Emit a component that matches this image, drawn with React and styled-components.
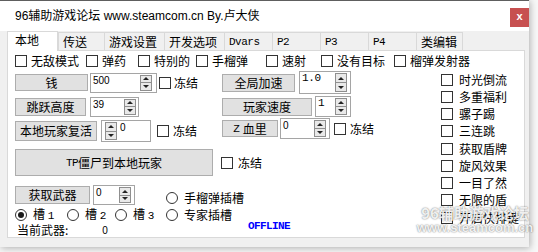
import React from 'react';
import styled, { createGlobalStyle } from 'styled-components';

const Global = createGlobalStyle`
  html, body { margin: 0; padding: 0; }
  body {
    background: #f7f7f7;
    width: 538px; height: 252px; overflow: hidden;
    font-family: "Noto Sans CJK SC", "Noto Sans", sans-serif;
    font-size: 12px; color: #000;
  }
`;

const Page = styled.div`
  position: relative;
  width: 538px; height: 252px;
`;

const Window = styled.div`
  width: 529px; height: 247px;
  box-sizing: border-box;
  border-top: 1px solid #5e5e5e;
  background: #f0f0f0;
  box-shadow: 1px 1px 7px rgba(0,0,0,0.3);
  display: flex; flex-direction: column;
`;

const TitleBar = styled.div`
  height: 30px; flex: none;
  background: #fff;
  display: flex; align-items: flex-start; justify-content: space-between;
  padding-left: 15px;
`;

const TitleText = styled.div`
  margin-top: 9px;
  font-size: 12px; line-height: 12px;
  font-family: "Liberation Sans", "Noto Sans CJK SC", sans-serif;
  color: #000;
`;

const CloseBtn = styled.div`
  margin-top: 7px;
  width: 19px; height: 19px;
  background: #c75050;
  color: #fff; font-weight: bold;
  font-family: "Liberation Sans", sans-serif; font-size: 11px; line-height: 17px;
  text-align: center;
`;

const TabStrip = styled.div`
  height: 19px; flex: none;
  display: flex; align-items: flex-end;
  padding-left: 7px;
`;

const Tab = styled.div`
  position: relative;
  box-sizing: border-box;
  width: ${p => p.$w}px;
  height: ${p => (p.$active ? 20 : 18)}px;
  margin-bottom: ${p => (p.$active ? -1 : 0)}px;
  z-index: ${p => (p.$active ? 2 : 1)};
  background: ${p => (p.$active ? '#fff' : '#f0f0f0')};
  border: 1px solid #d9d9d9;
  border-bottom: none;
  border-right: ${p => (p.$active || p.$last ? '1px solid #d9d9d9' : 'none')};
  padding-left: ${p => (p.$active ? 7 : 4)}px;
  display: flex; align-items: center;
  padding-bottom: ${p => (p.$active ? 3 : 0)}px;
  font-size: 12px; line-height: 12px;
`;

const Mono = styled.span`
  font-family: "Liberation Mono", monospace;
  font-size: ${p => p.$size || 11}px;
  letter-spacing: ${p => p.$ls ?? -0.5}px;
`;

const Panel = styled.div`
  margin-left: 7px;
  width: 518px; height: 188px; flex: none;
  box-sizing: border-box;
  border: 1px solid #d9d9d9;
  background: #fff;
  padding-left: 7px;
  display: flex; flex-direction: column;
`;

const CheckRow = styled.div`
  margin-top: 1px;
  height: 18px;
  display: flex; align-items: center;
`;

const Label = styled.label`
  display: flex; align-items: center;
  gap: ${p => p.$gap ?? 4}px;
  width: ${p => (p.$w ? `${p.$w}px` : 'auto')};
  flex: none;
  font-size: 12px; line-height: 12px;
  white-space: nowrap;
  margin-left: ${p => p.$ml || 0}px;
  margin-top: ${p => p.$mt || 0}px;
  margin-bottom: ${p => p.$mb || 0}px;
  height: ${p => (p.$h ? `${p.$h}px` : 'auto')};
`;

const Box = styled.span`
  width: 12px; height: 12px; flex: none;
  box-sizing: border-box;
  border: 1px solid #333;
  background: #fff;
`;

const Circle = styled.span`
  width: 12px; height: 12px; flex: none;
  box-sizing: border-box;
  border: 1px solid #333;
  border-radius: 50%;
  background: #fff;
  display: flex; align-items: center; justify-content: center;
  &::after {
    content: '';
    display: ${p => (p.$on ? 'block' : 'none')};
    width: 6px; height: 6px; border-radius: 50%;
    background: #1a1a1a;
  }
`;

const Main = styled.div`
  margin-top: 2px;
  display: flex;
`;

const LeftArea = styled.div`
  width: 420px; flex: none;
  display: flex; flex-direction: column;
`;

const Row = styled.div`
  display: flex; align-items: center;
  height: ${p => p.$h}px;
  margin-top: ${p => p.$mt || 0}px;
`;

const Cell = styled.div`
  display: flex; align-items: center;
  width: ${p => (p.$w ? `${p.$w}px` : 'auto')};
  flex: none;
  margin-bottom: ${p => p.$mb || 0}px;
`;

const Button = styled.div`
  box-sizing: border-box;
  width: ${p => p.$w}px; height: ${p => p.$h}px; flex: none;
  margin-left: ${p => p.$ml || 0}px;
  margin-bottom: ${p => p.$mb || 0}px;
  background: #e1e1e1;
  border: 1px solid #adadad;
  display: flex; align-items: center; justify-content: center;
  font-size: 12px; line-height: 12px;
  white-space: nowrap;
`;

const Field = styled.div`
  box-sizing: border-box;
  width: ${p => p.$w}px; height: ${p => p.$h}px; flex: none;
  margin-left: ${p => p.$ml || 0}px;
  margin-bottom: ${p => p.$mb || 0}px;
  border: 1px solid #a5a5a5;
  background: #fff;
  display: flex;
  flex-direction: ${p => (p.$spinLeft ? 'row-reverse' : 'row')};
  justify-content: ${p => (p.$spinLeft ? 'flex-end' : 'space-between')};
  padding: 0 ${p => p.$pr ?? 3}px 0 ${p => p.$pl ?? 2}px;
`;

const Value = styled.span`
  font-family: ${p => (p.$mono ? '"Liberation Mono", monospace' : '"Liberation Sans", sans-serif')};
  font-size: ${p => (p.$mono ? 11 : 10)}px;
  line-height: 11px;
  margin-top: ${p => p.$mt ?? 1}px;
  margin-left: ${p => p.$ml || 0}px;
  letter-spacing: ${p => (p.$mono ? -0.4 : 0)}px;
`;

const Spin = styled.div`
  width: 12px; flex: none;
  margin: 1px 0;
  box-sizing: border-box;
  border: 1px solid #8f8f8f;
  background: #e9e9e9;
  display: flex; flex-direction: column;
`;

const SpinHalf = styled.div`
  flex: 1;
  display: flex; align-items: center; justify-content: center;
  & + & { border-top: 1px solid #8f8f8f; }
  &::after {
    content: '';
    width: 0; height: 0;
    border-left: 3px solid transparent;
    border-right: 3px solid transparent;
    ${p => (p.$down ? 'border-top: 3px solid #222;' : 'border-bottom: 3px solid #222;')}
  }
`;

const Text = styled.span`
  font-size: 12px; line-height: 12px;
  margin-left: ${p => p.$ml || 0}px;
  white-space: nowrap;
`;

const Offline = styled.span`
  font-family: "Liberation Mono", monospace;
  font-size: 11px; line-height: 11px;
  font-weight: bold;
  letter-spacing: -0.6px;
  color: #0000ff;
  margin-left: ${p => p.$ml || 0}px;
  margin-bottom: 7px;
`;

const RightList = styled.div`
  margin-left: 6px;
  display: flex; flex-direction: column;
`;

const ListItem = styled.label`
  height: 17.25px;
  display: flex; align-items: center; gap: 6px;
  font-size: 12px; line-height: 12px;
  white-space: nowrap;
`;

const Watermark = styled.div`
  position: absolute;
  left: 416px; top: 205px;
  width: 118px;
  display: flex; flex-direction: column; align-items: center;
  color: rgba(255,255,255,0.9);
  text-shadow: 0 0 2px rgba(0,0,0,0.4), 0 0 1px rgba(0,0,0,0.3);
  font-weight: bold;
  pointer-events: none;
`;

const WmLine = styled.div`
  font-family: ${p => (p.$latin ? '"Liberation Sans", sans-serif' : '"Noto Sans CJK SC", sans-serif')};
  font-size: ${p => p.$size}px;
  line-height: ${p => p.$lh}px;
  white-space: nowrap;
`;

const SpinField = ({ w, h, value, mono, spinLeft, ml, mb, pl, pr, vml }) => (
  <Field $w={w} $h={h} $spinLeft={spinLeft} $ml={ml} $mb={mb} $pl={pl} $pr={pr}>
    <Value $mono={mono} $ml={vml}>{value}</Value>
    <Spin>
      <SpinHalf />
      <SpinHalf $down />
    </Spin>
  </Field>
);

const Check = ({ children, ...rest }) => (
  <Label {...rest}>
    <Box />
    <span>{children}</span>
  </Label>
);

const Radio = ({ children, on, ...rest }) => (
  <Label $gap={6} {...rest}>
    <Circle $on={on} />
    <span>{children}</span>
  </Label>
);

const tabs = [
  { label: '本地', w: 51, active: true },
  { label: '传送', w: 46 },
  { label: '游戏设置', w: 60 },
  { label: '开发选项', w: 60 },
  { label: <Mono>Dvars</Mono>, w: 48 },
  { label: <Mono>P2</Mono>, w: 48 },
  { label: <Mono>P3</Mono>, w: 48 },
  { label: <Mono>P4</Mono>, w: 48 },
  { label: '类编辑', w: 47, last: true },
];

const topChecks = [
  ['无敌模式', 71], ['弹药', 52], ['特别的', 58], ['手榴弹', 70],
  ['速射', 55], ['没有目标', 73], ['榴弹发射器', 0],
];

const rightChecks = ['时光倒流', '多重福利', '骡子踢', '三连跳', '获取盾牌', '旋风效果', '一目了然', '无限的盾', '开启快排键'];

export default function App() {
  return (
    <Page>
      <Global />
      <Window>
        <TitleBar>
          <TitleText>96辅助游戏论坛 www.steamcom.cn By.卢大侠</TitleText>
          <CloseBtn>x</CloseBtn>
        </TitleBar>
        <TabStrip>
          {tabs.map((t, i) => (
            <Tab key={i} $w={t.w} $active={t.active} $last={t.last}>{t.label}</Tab>
          ))}
        </TabStrip>
        <Panel>
          <CheckRow>
            {topChecks.map(([l, w]) => (
              <Check key={l} $w={w || undefined}>{l}</Check>
            ))}
          </CheckRow>
          <Main>
            <LeftArea>
              <Row $h={23}>
                <Cell $w={207}>
                  <Button $w={73} $h={17}>钱</Button>
                  <SpinField w={67} h={20} value="500" ml={2} pr={4} />
                  <Check $ml={2} $gap={3}>冻结</Check>
                </Cell>
                <Cell>
                  <Button $w={73} $h={18}>全局加速</Button>
                  <SpinField w={52} h={23} value="1.0" mono ml={4} />
                </Cell>
              </Row>
              <Row $h={21} $mt={2}>
                <Cell $w={207}>
                  <Button $w={71} $h={18}>跳跃高度</Button>
                  <SpinField w={49} h={20} value="39" ml={4} pr={2} />
                </Cell>
                <Cell>
                  <Button $w={90} $h={18}>玩家速度</Button>
                  <SpinField w={36} h={21} value="1" mono ml={3} />
                </Cell>
              </Row>
              <Row $h={24} $mt={2}>
                <Cell $w={207}>
                  <Button $w={82} $h={20}>本地玩家复活</Button>
                  <SpinField w={50} h={22} value="0" spinLeft ml={4} pl={3} vml={3} />
                  <Check $ml={6} $gap={4}>冻结</Check>
                </Cell>
                <Cell $mb={5}>
                  <Button $w={56} $h={17}><Mono $ls={0}>Z</Mono>&nbsp;血里</Button>
                  <SpinField w={50} h={21} value="0" ml={2} />
                  <Check $ml={4} $gap={4}>冻结</Check>
                </Cell>
              </Row>
              <Row $h={27} $mt={6}>
                <Button $w={198} $h={27}><Mono $ls={-0.6}>TP</Mono>僵尸到本地玩家</Button>
                <Check $ml={8} $gap={5}>冻结</Check>
              </Row>
              <Row $h={20} $mt={9}>
                <Button $w={75} $h={18}>获取武器</Button>
                <SpinField w={42} h={20} value="0" ml={3} />
                <Radio $ml={31} $mt={6}>手榴弹插槽</Radio>
              </Row>
              <Row $h={14} $mt={3}>
                <Radio on $w={52}>槽 <Mono $ls={0}>1</Mono></Radio>
                <Radio $w={48}>槽 <Mono $ls={0}>2</Mono></Radio>
                <Radio $w={51}>槽 <Mono $ls={0}>3</Mono></Radio>
                <Radio>专家插槽</Radio>
              </Row>
              <Row $h={14} $mt={1}>
                <Text $ml={2}>当前武器:</Text>
                <Value $ml={34} $mt={0}>0</Value>
                <Offline $ml={140}>OFFLINE</Offline>
              </Row>
            </LeftArea>
            <RightList>
              {rightChecks.map(l => (
                <ListItem key={l}>
                  <Box />
                  <span>{l}</span>
                </ListItem>
              ))}
            </RightList>
          </Main>
        </Panel>
      </Window>
      <Watermark>
        <WmLine $size={15} $lh={15}>96辅助游戏论坛</WmLine>
        <WmLine $latin $size={13} $lh={15}>www.steamcom.cn</WmLine>
      </Watermark>
    </Page>
  );
}
